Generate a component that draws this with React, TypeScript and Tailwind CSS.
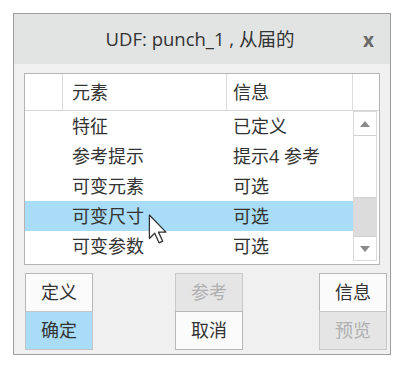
import React from 'react';

const rows = [
  { name: '特征', info: '已定义' },
  { name: '参考提示', info: '提示4 参考' },
  { name: '可变元素', info: '可选' },
  { name: '可变尺寸', info: '可选', selected: true },
  { name: '可变参数', info: '可选' },
];

const font = { fontFamily: '"Open Sans", "Noto Sans CJK SC", sans-serif' };

const Cursor = () => (
  <svg width="22" height="32" viewBox="0 0 20 30" className="absolute left-[148px] top-[214px]">
    <path d="M1 1 L1 23 L6 18 L10 27 L13.5 25.5 L9.5 17 L16.5 17 Z" fill="#fff" stroke="#333" strokeWidth="1.2" strokeLinejoin="round" />
  </svg>
);

const Btn = ({ label, kind }: { label: string; kind?: 'disabled' | 'active' }) => (
  <div
    className={`w-[68px] h-[39px] border flex items-center justify-center text-[18px] ${
      kind === 'disabled'
        ? 'bg-[#e5e5e5] border-[#c8c8c8] text-[#b0b0b0]'
        : kind === 'active'
        ? 'bg-[#a9dcf6] border-[#c4c4c4] text-[#333]'
        : 'bg-[#fbfbfb] border-[#b8b8b8] text-[#333]'
    }`}
  >
    {label}
  </div>
);

export default function App() {
  return (
    <div className="w-[403px] h-[371px] bg-white pt-[13px] pl-[13px] relative" style={font}>
      <div className="w-[378px] h-[342px] border border-[#9e9e9e] bg-[#f0f0f0] flex flex-col">
        {/* title bar */}
        <div className="h-[50px] bg-[#e2e3e3] flex items-center relative shrink-0">
          <div className="w-full text-center text-[18.5px] text-[#333] pr-[4px]">UDF: punch_1 , 从届的</div>
          <div className="absolute right-[16px] top-[12px] text-[19px] font-bold text-[#6a6a6a]">x</div>
        </div>

        {/* table */}
        <div className="mt-[9px] ml-[10px] w-[356px] h-[192px] border border-[#b4b4b4] bg-white flex flex-col">
          <div className="h-[37px] flex border-b border-[#d6d6d6] shrink-0 text-[18px] text-[#333]">
            <div className="w-[38px] border-r border-[#dcdcdc]" />
            <div className="w-[164px] border-r border-[#dcdcdc] pl-[9px] flex items-center">元素</div>
            <div className="w-[126px] border-r border-[#dcdcdc] pl-[6px] flex items-center">信息</div>
            <div className="flex-1" />
          </div>
          <div className="flex flex-1">
            <div className="flex-1 flex flex-col">
              {rows.map((r) => (
                <div
                  key={r.name}
                  className={`h-[30px] flex items-center text-[18px] text-[#333] ${r.selected ? 'bg-[#a9dcf6]' : ''}`}
                >
                  <div className="w-[47px]" />
                  <div className="w-[161px]">{r.name}</div>
                  <div>{r.info}</div>
                </div>
              ))}
            </div>
            {/* scrollbar */}
            <div className="w-[24px] mr-[2px] h-[150px] border border-[#dadada] bg-[#dcdcdc] flex flex-col">
              <div className="h-[24px] bg-white border-b border-[#d0d0d0] flex items-center justify-center">
                <svg width="10" height="6" viewBox="0 0 10 6"><path d="M0 6 L5 0 L10 6 Z" fill="#8a8a8a" /></svg>
              </div>
              <div className="h-[62px] bg-white border-b border-[#d0d0d0]" />
              <div className="flex-1" />
              <div className="h-[24px] bg-white border-t border-[#d0d0d0] flex items-center justify-center">
                <svg width="10" height="6" viewBox="0 0 10 6"><path d="M0 0 L5 6 L10 0 Z" fill="#8a8a8a" /></svg>
              </div>
            </div>
          </div>
        </div>

        {/* buttons */}
        <div className="mt-[8px] ml-[11px] flex">
          <div className="flex flex-col -space-y-px">
            <Btn label="定义" />
            <Btn label="确定" kind="active" />
          </div>
          <div className="flex flex-col -space-y-px ml-[82px]">
            <Btn label="参考" kind="disabled" />
            <Btn label="取消" />
          </div>
          <div className="flex flex-col -space-y-px ml-[76px]">
            <Btn label="信息" />
            <Btn label="预览" kind="disabled" />
          </div>
        </div>
      </div>
      <Cursor />
    </div>
  );
}
